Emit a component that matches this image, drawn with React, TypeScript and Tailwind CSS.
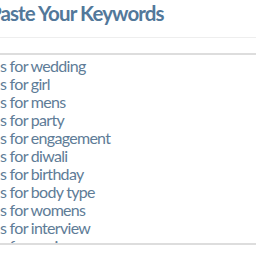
import React from 'react';

const keywords = [
  'wedding',
  'girl',
  'mens',
  'party',
  'engagement',
  'diwali',
  'birthday',
  'body type',
  'womens',
  'interview',
  'anniversary',
];

export default function App() {
  return (
    <div className="w-[256px] h-[256px] overflow-hidden bg-white font-['Lato',sans-serif]">
      {/* Header */}
      <div className="h-[38px] border-b border-[#eeeeee] overflow-hidden">
        <h2 className="-ml-[11px] pt-[1px] text-[20.5px] leading-[24px] tracking-[-0.9px] font-bold text-[#52789a] whitespace-nowrap">
          Paste Your Keywords
        </h2>
      </div>

      {/* Keywords box */}
      <div className="mt-[15px] h-[192px] border-y-2 border-[#dddddd] overflow-hidden">
        <div className="pt-[1.5px] text-[16px] leading-[18px] tracking-[-0.7px] text-[#5e7c97]">
          {keywords.map(k => (
            <div key={k} className="whitespace-nowrap">s for {k}</div>
          ))}
        </div>
      </div>
    </div>
  );
}
